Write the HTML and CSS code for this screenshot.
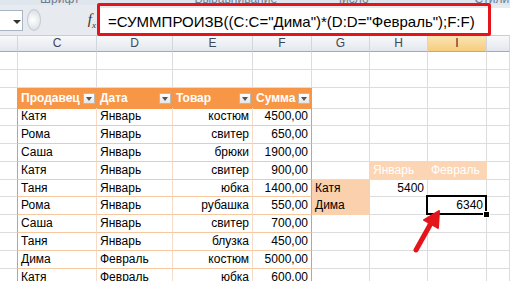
FILE: index.html
```html
<!DOCTYPE html>
<html lang="ru">
<head>
  <meta charset="UTF-8" />
  <title>СУММПРОИЗВ</title>
  <link rel="stylesheet" href="styles.css">
</head>
<body>
  <!-- ribbon group captions, cut off at the top -->
  <div class="ribbon">
    <span class="cap c1">Шрифт</span>
    <span class="cap c2">Выравнивание</span>
    <span class="cap c3">Число</span>
    <span class="cap c4">Стили</span>
  </div>

  <!-- formula bar -->
  <div class="fbar">
    <div class="namebox"><i class="drop"></i></div>
    <div class="tools">
      <span class="grip"></span>
      <span class="fx">f<sub>x</sub></span>
    </div>
    <div class="finput">=СУММПРОИЗВ((C:C="Дима")*(D:D="Февраль");F:F)</div>
  </div>
  <div class="redbox"></div>

  <div class="sheet">
    <div class="row heads">
      <div class="ch"></div><div class="ch">C</div><div class="ch">D</div><div class="ch">E</div>
      <div class="ch">F</div><div class="ch">G</div><div class="ch">H</div><div class="ch on">I</div><div class="ch"></div>
    </div>

    <div class="row r18">
      <div class="c"></div><div class="c"></div><div class="c"></div><div class="c"></div><div class="c"></div>
      <div class="c"></div><div class="c"></div><div class="c"></div><div class="c"></div>
    </div>
    <div class="row r18">
      <div class="c"></div><div class="c"></div><div class="c"></div><div class="c"></div><div class="c"></div>
      <div class="c"></div><div class="c"></div><div class="c"></div><div class="c"></div>
    </div>

    <div class="row r20">
      <div class="c edge"></div>
      <div class="c th">Продавец<i class="btn"></i></div>
      <div class="c th">Дата<i class="btn"></i></div>
      <div class="c th">Товар<i class="btn"></i></div>
      <div class="c th last">Сумма<i class="btn"></i></div>
      <div class="c"></div><div class="c"></div><div class="c"></div><div class="c"></div>
    </div>

    <div class="row">
      <div class="c edge"></div><div class="c t">Катя</div><div class="c t">Январь</div><div class="c t num">костюм</div><div class="c t num last">4500,00</div>
      <div class="c"></div><div class="c"></div><div class="c"></div><div class="c"></div>
    </div>
    <div class="row">
      <div class="c edge"></div><div class="c t">Рома</div><div class="c t">Январь</div><div class="c t num">свитер</div><div class="c t num last">650,00</div>
      <div class="c"></div><div class="c"></div><div class="c"></div><div class="c"></div>
    </div>
    <div class="row">
      <div class="c edge"></div><div class="c t">Саша</div><div class="c t">Январь</div><div class="c t num">брюки</div><div class="c t num last">1900,00</div>
      <div class="c"></div><div class="c"></div><div class="c"></div><div class="c"></div>
    </div>
    <div class="row">
      <div class="c edge"></div><div class="c t">Катя</div><div class="c t">Январь</div><div class="c t num">свитер</div><div class="c t num last">900,00</div>
      <div class="c"></div><div class="c sh">Январь</div><div class="c sh">Февраль</div><div class="c"></div>
    </div>
    <div class="row">
      <div class="c edge"></div><div class="c t">Таня</div><div class="c t">Январь</div><div class="c t num">юбка</div><div class="c t num last">1400,00</div>
      <div class="c sg">Катя</div><div class="c num">5400</div><div class="c"></div><div class="c"></div>
    </div>
    <div class="row">
      <div class="c edge"></div><div class="c t">Рома</div><div class="c t">Январь</div><div class="c t num">рубашка</div><div class="c t num last">550,00</div>
      <div class="c sg">Дима</div><div class="c"></div><div class="c num sel">6340</div><div class="c"></div>
    </div>
    <div class="row">
      <div class="c edge"></div><div class="c t">Саша</div><div class="c t">Январь</div><div class="c t num">свитер</div><div class="c t num last">700,00</div>
      <div class="c"></div><div class="c"></div><div class="c"></div><div class="c"></div>
    </div>
    <div class="row">
      <div class="c edge"></div><div class="c t">Таня</div><div class="c t">Январь</div><div class="c t num">блузка</div><div class="c t num last">450,00</div>
      <div class="c"></div><div class="c"></div><div class="c"></div><div class="c"></div>
    </div>
    <div class="row">
      <div class="c edge"></div><div class="c t">Дима</div><div class="c t">Февраль</div><div class="c t num">костюм</div><div class="c t num last">5000,00</div>
      <div class="c"></div><div class="c"></div><div class="c"></div><div class="c"></div>
    </div>
    <div class="row">
      <div class="c edge"></div><div class="c t">Катя</div><div class="c t">Февраль</div><div class="c t num">юбка</div><div class="c t num last">600,00</div>
      <div class="c"></div><div class="c"></div><div class="c"></div><div class="c"></div>
    </div>
  </div>

  <!-- red pointer -->
  <svg class="arrow" width="510" height="281" viewBox="0 0 510 281">
    <line x1="416" y1="250" x2="430" y2="225" stroke="#e5141b" stroke-width="5" stroke-linecap="round"/>
    <polygon points="439,211 438,228 424,220" fill="#e5141b" stroke="#e5141b" stroke-width="2" stroke-linejoin="round"/>
  </svg>
</body>
</html>
```

FILE: styles.css
```css
body { margin: 0; width: 510px; height: 281px; overflow: hidden; position: relative; background: #fff; font-family: "Liberation Sans", Arial, sans-serif; }

/* ribbon */
.ribbon { height: 5px; overflow: hidden; background: #dfe6ee; display: flex; }
.cap { font-size: 12px; line-height: 12px; margin-top: -7px; color: #6f7d90; white-space: nowrap; }
.c1 { margin-left: 40px; }
.c2 { margin-left: 115px; }
.c3 { margin-left: 57px; }
.c4 { margin-left: 106px; }

/* formula bar */
.fbar { height: 31px; display: flex; background: #e7ebf0; border-bottom: 1px solid #c6ced8; box-sizing: border-box; }
.namebox { width: 22px; margin: 5px 0 4px; background: #fff; border: 1px solid #a9b4c2; border-left: none; position: relative; }
.drop { position: absolute; left: 13px; top: 9px; border: 4px solid transparent; border-top: 4px solid #333; }
.tools { width: 75px; display: flex; align-items: center; justify-content: space-between; padding: 0 2px 0 4px; box-sizing: border-box; }
.grip { width: 12px; height: 20px; border-radius: 50%; background: radial-gradient(circle at 40% 50%, #fff, #d3d9e0); border: 1px solid #c3cad3; }
.fx { font-family: "Liberation Serif", serif; font-style: italic; font-size: 15px; color: #333; }
.fx sub { font-size: 9px; }
.finput { flex: 1; margin-top: 3px; background: #fff; font-size: 15px; line-height: 27px; padding-left: 10px; color: #000; white-space: nowrap; }

.redbox { position: absolute; left: 97px; top: 3px; width: 394px; height: 33px; border: 3px solid #e5141b; box-sizing: border-box; border-radius: 2px; }

/* grid */
.row { display: grid; grid-template-columns: 18px 79px 76px 80px 59px 58px 58px 59px 23px; height: 17.9px; }
.r18 { height: 18px; }
.r20 { height: 20px; }
.heads { height: 16px; }

.ch { background: linear-gradient(#f8f9fb, #e3e7ed); border-right: 1px solid #d2d7de; border-bottom: 1px solid #9eabbd; font-size: 12px; line-height: 15px; text-align: center; color: #3d4758; box-sizing: border-box; }
.ch.on { background: linear-gradient(#fbe4b4, #f5cd7e); border-bottom-color: #e5a43c; color: #333; }

.c { border-right: 1px solid #dadcdd; border-bottom: 1px solid #dadcdd; box-sizing: border-box; font-size: 12px; line-height: 17px; padding: 0 3px; white-space: nowrap; overflow: hidden; position: relative; }
.num { text-align: right; }

/* orange table */
.edge { border-right-color: #f79646; }
.t { border-bottom-color: #f7c7a0; border-right-color: #f6dcc8; }
.t.last, .th.last { border-right-color: #f79646; }
.th { background: #f79646; border-color: #f79646; color: #fff; font-weight: bold; display: flex; align-items: center; justify-content: space-between; padding: 0 1px 0 3px; line-height: 20px; overflow: visible; }
.btn { width: 12px; height: 11px; box-sizing: border-box; border: 1px solid #b9b9b9; background: linear-gradient(#ffffff, #e6e6e6); position: relative; }
.btn::after { content: ""; position: absolute; left: 2px; top: 3px; border: 3px solid transparent; border-top: 4px solid #555; }

/* summary block */
.sh { background: #fcd5b4; border-color: #fcd5b4; color: #fff; }
.sg { background: #fbd0ac; border-color: #fbd0ac; color: #000; }

.sel { overflow: visible; }
.sel::after { content: ""; position: absolute; left: -2px; top: -2px; right: -1px; bottom: -1px; border: 2px solid #000; }
.sel::before { content: ""; position: absolute; right: -4px; bottom: -4px; width: 5px; height: 5px; background: #000; border: 1px solid #fff; z-index: 1; }

.arrow { position: absolute; left: 0; top: 0; }
```
